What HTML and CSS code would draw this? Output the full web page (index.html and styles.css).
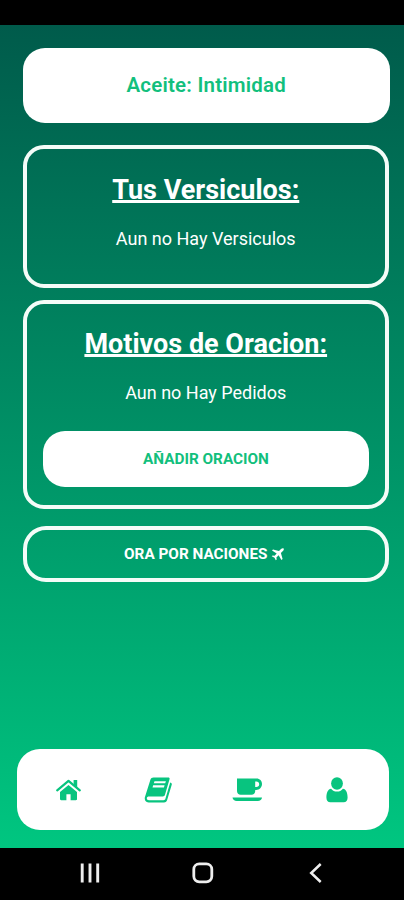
FILE: index.html
```html
<!DOCTYPE html>
<html lang="es">
<head>
<meta charset="utf-8">
<title>Aceite: Intimidad</title>
<link rel="stylesheet" href="styles.css">
</head>
<body>
<div class="status-bar"></div>
<main class="screen">
  <header class="banner"><span>Aceite: Intimidad</span></header>
  <section class="card verses">
    <h2>Tus Versiculos:</h2>
    <p>Aun no Hay Versiculos</p>
  </section>
  <section class="card requests">
    <h2>Motivos de Oracion:</h2>
    <p>Aun no Hay Pedidos</p>
    <button class="add"><span>AÑADIR ORACION</span></button>
  </section>
  <button class="nations">
    <span>ORA POR NACIONES</span>
    <svg class="plane" width="13" height="13" viewBox="0 0 13 13"><path d="M12.600.4c.5.7.1 1.800-.7 2.600L9.900 5l1.700 6-1.200 1-2.800-4.700-2.200 2.100.3 2-.9.900-1.300-2.600L.7 8.300l.9-.9 2 .3 2.100-2.200L1 2.600l1-1.200 6 1.700L10 1.100C10.800.3 11.900-.1 12.600.4z"/></svg>
  </button>
  <nav class="tabs">
    <svg class="home" width="26" height="22" viewBox="0 0 26 22"><path d="M4 13v7c0 .8.400 1.200 1.200 1.200h5.200v-6h4.200v6h5.200c.8 0 1.200-.4 1.200-1.200v-7l-8.500-7z"/><path d="M1.200 11.400 12.500 1.900 23.800 11.400" fill="none" stroke="currentColor" stroke-width="2.200" stroke-linecap="round" stroke-linejoin="round"/><path d="M17.600 1h3.600v8.200l-3.600-3z"/></svg>
    <svg class="book" width="28" height="26" viewBox="0 0 28 26"><path fill-rule="evenodd" d="M9.500.5h14.700c1 0 1.700.6 1.400 1.600l-4.600 15.700c-.4 1.300-1 1.700-2.200 1.700H5.200c-1.500 0-2.400.5-2.400 1.700 0 1.300.8 2 2.200 2h14.500c1 0 1.600-.4 1.900-1.400L26.200 5.600l1 .3c.6.3.8.9.6 1.600l-4.500 15c-.5 1.900-1.500 2.900-3.300 2.900H4.600C1.900 25.400.4 23 .8 20.500L6.400 2.800C6.900 1.300 7.900.5 9.500.5zM10.500 4.200l-.7 2.100h11.400l.7-2.100zM9.200 8.300l-.7 2.100h11.400l.7-2.100z"/></svg>
    <svg class="cup" width="31" height="24" viewBox="0 0 31 24"><path fill-rule="evenodd" d="M5 .5h19.500c3.300 0 5.500 2.400 5.500 5.600 0 3.400-2.500 5.900-5.800 5.900h-1v1c0 2.200-1.500 3.800-3.700 3.800H8.700C6.500 16.800 5 15.200 5 13zM23.200 3.500V9h1.100c1.700 0 2.900-1.100 2.900-2.800 0-1.600-1.200-2.700-2.800-2.700zM.5 19.500h29.500c-.2 2-1.900 3.500-4.200 3.500H4.700C2.500 23 .8 21.500.5 19.500z"/></svg>
    <svg class="user" width="22" height="26" viewBox="0 0 22 26"><ellipse cx="11" cy="6.500" rx="5.900" ry="6.200"/><path d="M5.100 11.700c1.500 1.900 3.500 2.900 5.900 2.900s4.400-1 5.900-2.900c3.200.4 4.700 4 4.700 8.800 0 2.800-1.400 4.800-4 4.800H4.400c-2.600 0-4-2-4-4.800 0-4.800 1.500-8.400 4.700-8.800z"/></svg>
  </nav>
</main>
<footer class="system-bar">
  <svg width="20" height="20" viewBox="0 0 20 20"><path d="M2.200.5v19M10 .5v19M17.700.5v19" stroke-width="2.900"/></svg>
  <svg class="circle" width="22" height="22" viewBox="0 0 22 22"><rect x="1.800" y="1.800" width="18" height="18" rx="5.500" stroke-width="2.800"/></svg>
  <svg class="back" width="14" height="20" viewBox="0 0 14 20"><path d="M11.700 1 2.200 10l9.500 9" stroke-width="2.500"/></svg>
</footer>
</body>
</html>
```
FILE: styles.css
```css
* { box-sizing: border-box; }

body {
  margin: 0;
  width: 404px;
  height: 900px;
  display: flex;
  flex-direction: column;
  overflow: hidden;
  font-family: Roboto, "Liberation Sans", sans-serif;
  color: #fff;
  background: #000;
}

.status-bar { height: 25px; flex: none; }

.screen {
  height: 822.5px;
  flex: none;
  display: flex;
  flex-direction: column;
  padding: 23px 14px 17.500px 22.500px;
  background: linear-gradient(#005b4b, #00c680);
}

span { white-space: nowrap; }

.banner {
  height: 75px;
  width: 367.500px;
  padding-bottom: 2px;
  border-radius: 22px;
  background: #fff;
  color: #12bf7d;
  display: flex;
  align-items: center;
  justify-content: center;
  font-size: 20.500px;
  font-weight: 600;
  letter-spacing: 0.2px;
}

.card {
  width: 366.500px;
  border: 4px solid #f4fcf8;
  border-radius: 21px;
  text-align: center;
}

.verses { height: 143px; margin-top: 21.500px; }
.requests { height: 209px; margin-top: 12px; padding: 0 16.500px; }

h2 {
  margin: 25px 0 0;
  font-size: 27px;
  line-height: 32px;
  font-weight: 700;
  text-decoration: underline;
  text-decoration-thickness: 3px;
  text-decoration-skip-ink: none;
  text-underline-offset: 1px;
}

.requests h2 { margin-top: 24px; }

p { margin: 21px 0 0; font-size: 18px; line-height: 24px; }

button {
  font: 700 15.300px/20px Roboto, "Liberation Sans", sans-serif;
  padding: 0;
  display: flex;
  align-items: center;
  justify-content: center;
}

.add {
  width: 326px;
  height: 56.500px;
  margin-top: 26px;
  padding-top: 1px;
  border: 0;
  border-radius: 22px;
  background: #fff;
  color: #12bf7d;
}

.nations {
  width: 366.500px;
  height: 56px;
  margin-top: 17.500px;
  padding-right: 3px;
  border: 4px solid #f4fcf8;
  border-radius: 23px;
  background: none;
  color: #fff;
  gap: 4px;
}

.plane { fill: currentColor; }

.tabs {
  width: 372.500px;
  height: 81.500px;
  margin: auto 0 0 -6px;
  padding-top: 1px;
  border-radius: 23px;
  background: #fff;
  color: #08c47f;
  display: grid;
  grid-template-columns: repeat(4, 89.300px);
  justify-content: center;
  align-items: center;
  justify-items: center;
}

.tabs svg { fill: currentColor; }

.system-bar {
  flex: 1;
  display: flex;
  align-items: center;
  padding: 0 0 1px 80px;
}

.system-bar svg { fill: none; stroke: #eee; }
.circle { margin-left: 91.500px; }
.back { margin-left: 95px; }
```
